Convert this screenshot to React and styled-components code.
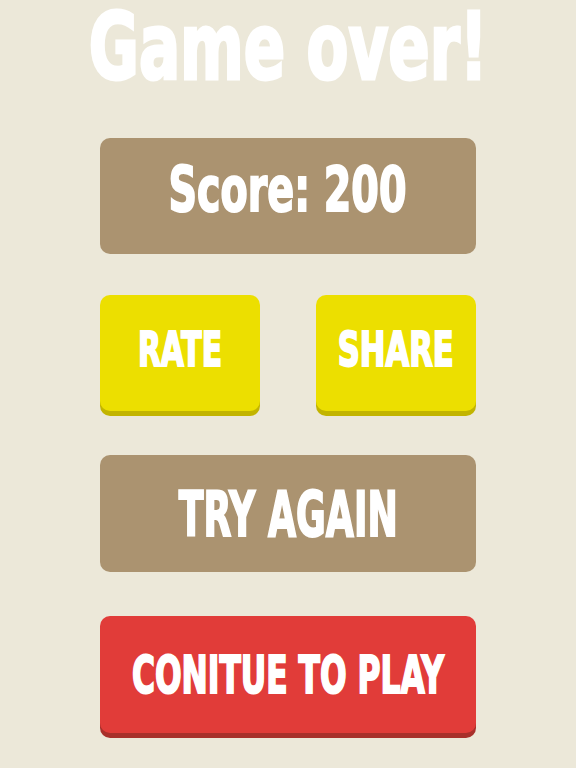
import React from "react";
import styled, { createGlobalStyle } from "styled-components";

const GlobalStyle = createGlobalStyle`
  * { box-sizing: border-box; }
  html, body {
    margin: 0;
    padding: 0;
    background-color: #ece8d9;
  }
`;

const App = () => {
  return (
    <>
      <GlobalStyle />
      <Screen>
        <Title>
          <Label size={93} squeeze={0.73} stroke={3}>Game over!</Label>
        </Title>
        <Panel shift={-12}>
          <Label size={62} squeeze={0.71}>Score: 200</Label>
        </Panel>
        <ButtonRow>
          <Button color="yellow" shift={-8}>
            <Label size={48} squeeze={0.69}>RATE</Label>
          </Button>
          <Button color="yellow" shift={-8}>
            <Label size={48} squeeze={0.71}>SHARE</Label>
          </Button>
        </ButtonRow>
        <TryAgain as="button" shift={1}>
          <Label size={63} squeeze={0.64}>TRY AGAIN</Label>
        </TryAgain>
        <Button color="red" wide shift={0}>
          <Label size={52} squeeze={0.67}>CONITUE TO PLAY</Label>
        </Button>
      </Screen>
    </>
  );
};

const colors = {
  yellow: { face: "#ecdf00", edge: "#c2b400" },
  red: { face: "#e13c39", edge: "#a8302b" },
};

const Screen = styled.div`
  width: 576px;
  height: 768px;
  padding: 0 100px;
  display: flex;
  flex-direction: column;
  align-items: stretch;
`;

const Title = styled.h1`
  margin: 1px -100px 44px;
  height: 93px;
  display: flex;
  justify-content: center;
  align-items: flex-start;
  font-size: inherit;
`;

const Panel = styled.div`
  height: 116px;
  border: none;
  padding: ${(p) => (p.shift < 0 ? `0 0 ${-p.shift}px` : `${p.shift || 0}px 0 0`)};
  border-radius: 10px;
  background-color: #ab9370;
  display: flex;
  align-items: center;
  justify-content: center;
  margin-bottom: 41px;
`;

const TryAgain = styled(Panel)`
  height: 117px;
  margin-bottom: 44px;
`;

const ButtonRow = styled.div`
  display: flex;
  justify-content: space-between;
  margin-bottom: 44px;
`;

const Button = styled.button`
  width: ${(p) => (p.wide ? "376px" : "160px")};
  height: ${(p) => (p.wide ? "117px" : "116px")};
  border: none;
  padding: ${(p) => (p.shift < 0 ? `0 0 ${-p.shift}px` : `${p.shift || 0}px 0 0`)};
  border-radius: 10px;
  background-color: ${(p) => colors[p.color].face};
  box-shadow: 0 5px 0 ${(p) => colors[p.color].edge};
  display: flex;
  align-items: center;
  justify-content: center;
`;

const Label = styled.span`
  display: inline-block;
  font-family: "DejaVu Sans Condensed", "Liberation Sans", sans-serif;
  font-weight: 700;
  font-size: ${(p) => p.size}px;
  line-height: 1;
  color: #ffffff;
  -webkit-text-stroke: ${(p) => p.stroke || 2}px #ffffff;
  white-space: nowrap;
  transform: scaleX(${(p) => p.squeeze});
`;

export default App;
